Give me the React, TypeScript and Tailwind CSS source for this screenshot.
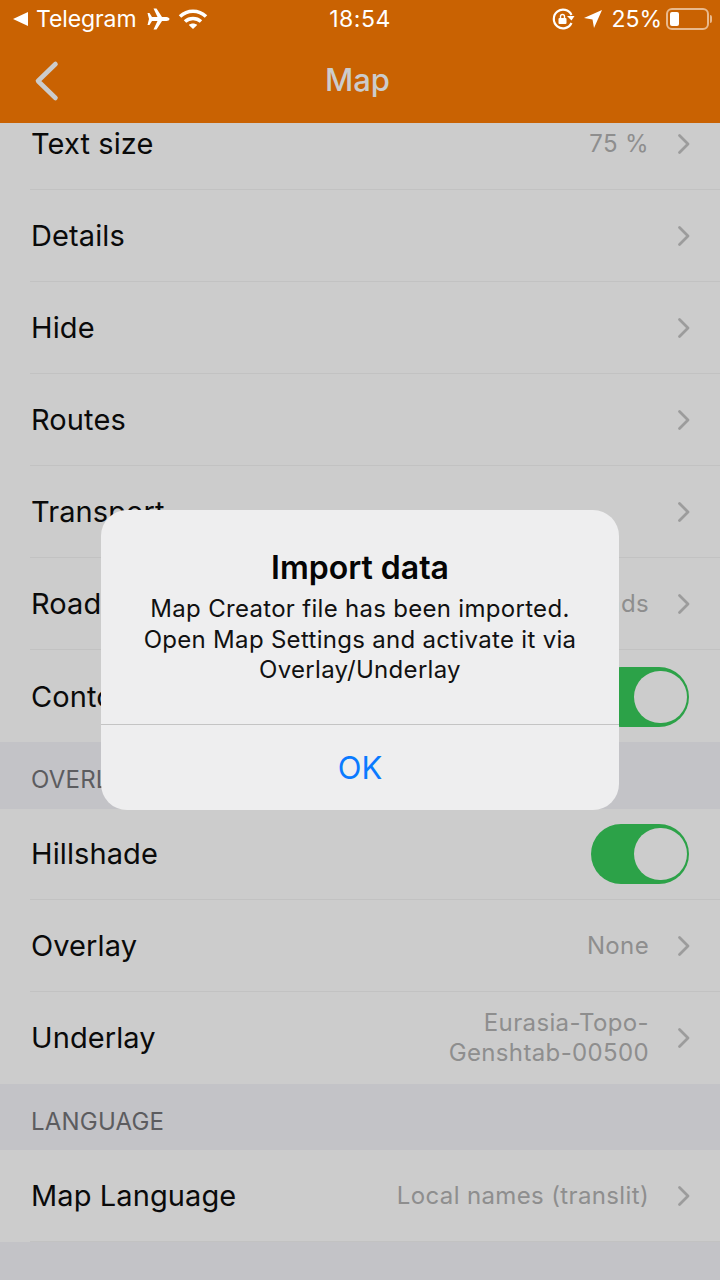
import React from "react";

const font = { fontFamily: '"Inter", "Liberation Sans", sans-serif' };

function Chevron() {
  return (
    <svg width="16" height="24" viewBox="0 0 16 24" fill="none" className="shrink-0">
      <path d="M3.5 3.5 L12 12 L3.5 20.5" stroke="#9c9c9c" strokeWidth="2.8" strokeLinecap="round" strokeLinejoin="round" />
    </svg>
  );
}

function Toggle() {
  return (
    <div className="w-[98px] h-[60px] rounded-full bg-[#2ca248] relative shrink-0 mr-[3px]">
      <div className="absolute right-[2px] top-[4px] w-[53px] h-[52px] rounded-full bg-[#cccccc]" />
    </div>
  );
}

function Row({ label, value, toggle, h = "h-[92px]", pb = "", last = false, wrap = false }: { label: string; value?: string; toggle?: boolean; h?: string; pb?: string; last?: boolean; wrap?: boolean }) {
  return (
    <div className={`${h} bg-[#cccccc] pl-[30px] shrink-0`}>
      <div className={`h-full flex items-center pr-[28px] ${pb} ${last ? "" : "border-b border-[#c2c2c2]"} ${last && toggle ? "pt-[2px]" : ""}`}>
        <span className="text-[29px] leading-[36px] text-[#0a0a0a] flex-1 pl-[1px] tracking-[0.1px]">{label}</span>
        {value && (
          <span className={`text-[24px] leading-[30px] text-[#8e8e8e] text-right mr-[27px] tracking-[0.36px] ${wrap ? "w-[220px]" : ""}`}>{value}</span>
        )}
        {toggle ? <Toggle /> : <Chevron />}
      </div>
    </div>
  );
}

function Section({ label, h = "h-[67px]" }: { label: string; h?: string }) {
  return (
    <div className={`${h} bg-[#c3c3c7] pl-[31px] pt-[23px] shrink-0`}>
      <span className="block text-[24px] leading-[30px] text-[#5c5c5f] tracking-[0.2px]">{label}</span>
    </div>
  );
}

function StatusBar() {
  return (
    <div className="h-[38px] flex items-center relative text-white text-[23px] leading-[28px]">
      <div className="flex items-center pl-[12px] flex-1">
        <svg width="17" height="16" viewBox="0 0 17 16" className="mr-[7px]"><path d="M16 1 V15 L1 8 Z" fill="#fff" /></svg>
        <span className="tracking-[-0.1px]">Telegram</span>
        <svg width="24" height="24" viewBox="0 0 24 24" className="ml-[10px]" fill="#fff">
          <path d="M1.5 6 H3.5 L6 10 H11.5 L7.5 1.5 H10.5 L16 10 H20.5 C22 10 23.5 11 23.5 12 C23.5 13 22 14 20.5 14 H16 L10.5 22.5 H7.5 L11.5 14 H6 L3.5 18 H1.5 L3 12 Z" />
        </svg>
        <svg width="30" height="22" viewBox="0 0 30 22" className="ml-[8px]" fill="none" stroke="#fff" strokeWidth="3.6">
          <path d="M2 8.5 C9.5 1.5 20.5 1.5 28 8.5" />
          <path d="M7 13.5 C11.5 9.5 18.5 9.5 23 13.5" />
          <path d="M15 21 L10.8 17 C13 15 17 15 19.2 17 Z" fill="#fff" stroke="none" />
        </svg>
      </div>
      <div className="absolute left-0 right-0 text-center tracking-[0.5px]">18:54</div>
      <div className="flex items-center pr-[8px]">
        <svg width="24" height="24" viewBox="0 0 24 24" fill="none" className="mr-[8px]">
          <path d="M20.5 8 A9.3 9.3 0 1 0 20.5 16" stroke="#fff" strokeWidth="2.2" />
          <path d="M16 9 L23.5 9 L20.5 13.5 Z" fill="#fff" />
          <rect x="7.5" y="11" width="8" height="6" rx="1" fill="#fff" />
          <path d="M9.5 11 V9.5 a2 2 0 0 1 4 0 V11" stroke="#fff" strokeWidth="1.4" />
        </svg>
        <svg width="20" height="20" viewBox="0 0 20 20" className="mr-[8px]" fill="#fff"><path d="M19 1 L11 19 L9.5 10.5 L1 9 Z" /></svg>
        <span className="mr-[4px]">25%</span>
        <div className="w-[43px] h-[22px] rounded-[6px] border-2 border-[#e9b98c] p-[2px] mr-[1px]">
          <div className="w-[9px] h-full rounded-[2px] bg-white" />
        </div>
        <div className="w-[2px] h-[8px] rounded-r bg-[#e9b98c]" />
      </div>
    </div>
  );
}

export default function App() {
  return (
    <div style={font} className="w-[720px] h-[1280px] bg-[#c3c3c7] overflow-hidden relative flex flex-col">
      <div className="h-[123px] bg-[#c96202] shrink-0">
        <StatusBar />
        <div className="h-[85px] relative flex items-center justify-center">
          <svg width="26" height="42" viewBox="0 0 26 42" fill="none" className="absolute left-[33px] top-[22px]">
            <path d="M22.5 4 L5 21 L22.5 38" stroke="#cccccc" strokeWidth="4.6" strokeLinecap="round" strokeLinejoin="round" />
          </svg>
          <span className="text-[31px] leading-[36px] font-medium text-[#cccccc] -mt-[2px] mr-[5px]">Map</span>
        </div>
      </div>
      <Row label="Text size" value="75 %" h="h-[67px]" pb="pb-[24px]" />
      <Row label="Details" />
      <Row label="Hide" />
      <Row label="Routes" />
      <Row label="Transport" />
      <Row label="Road style" value="Roads" />
      <Row label="Contour lines" toggle last />
      <Section label="OVERLAY" />
      <Row label="Hillshade" toggle h="h-[91px]" />
      <Row label="Overlay" value="None" />
      <Row label="Underlay" value="Eurasia-Topo-Genshtab-00500" wrap last />
      <Section label="LANGUAGE" h="h-[66px]" />
      <Row label="Map Language" value="Local names (translit)" />

      <div className="absolute left-[101px] top-[510px] w-[518px] h-[300px] rounded-[26px] bg-[#eeeeef] flex flex-col">
        <div className="h-[215px] border-b border-[#c4c4c4] pt-[38px] text-center">
          <div className="text-[32px] leading-[40px] font-semibold text-[#050505]">Import data</div>
          <div className="text-[24px] leading-[30.5px] text-[#111111] mt-[6px] tracking-[0.3px]">
            Map Creator file has been imported.
            <br />
            Open Map Settings and activate it via
            <br />
            Overlay/Underlay
          </div>
        </div>
        <div className="flex-1 flex items-center justify-center text-[31px] leading-[36px] text-[#0a7aff]">OK</div>
      </div>
    </div>
  );
}
